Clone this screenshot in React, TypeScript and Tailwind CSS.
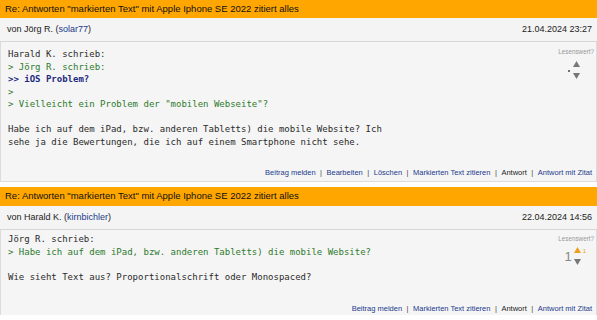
import React from "react";

const sans = "font-['Liberation_Sans',Arial,sans-serif]";
const mono = "font-['DejaVu_Sans_Mono',monospace]";

function Up({ color }: { color: string }) {
  return (
    <svg width="7" height="6" viewBox="0 0 7 6" className="block">
      <polygon points="3.5,0 7,6 0,6" fill={color} />
    </svg>
  );
}
function Down({ color }: { color: string }) {
  return (
    <svg width="7" height="6" viewBox="0 0 7 6" className="block">
      <polygon points="0,0 7,0 3.5,6" fill={color} />
    </svg>
  );
}

function Links({ items }: { items: string[] }) {
  return (
    <div className="flex justify-end items-center text-[7.5px] leading-[12px] pr-[4px]">
      {items.map((t, i) => (
        <React.Fragment key={t + i}>
          {i > 0 && <span className="text-[#444] px-[4.5px]">|</span>}
          <span className={t === "Antwort" ? "text-[#222]" : "text-[#1b3a8c]"}>{t}</span>
        </React.Fragment>
      ))}
    </div>
  );
}

function Header({ author, nick, date, h }: { author: string; nick: string; date: string; h: string }) {
  return (
    <>
      <div className={`${h} bg-[#ffa600] px-[5px] flex items-center text-[9.5px] text-[#111]`}>
        Re: Antworten "markierten Text" mit Apple Iphone SE 2022 zitiert alles
      </div>
      <div className="h-[24px] bg-[#f4f4f4] border-b border-[#d6d6d6] px-[7px] pt-[1px] pr-[5px] flex justify-between items-center text-[9px] text-[#222]">
        <span>
          von {author} (<span className="text-[#1b3a8c]">{nick}</span>)
        </span>
        <span>{date}</span>
      </div>
    </>
  );
}

export default function App() {
  return (
    <div className={`w-[597px] h-[320px] bg-white overflow-hidden ${sans}`}>
      {/* Post 1 */}
      <div>
        <Header author="Jörg R." nick="solar77" date="21.04.2024 23:27" h="h-[18px]" />
        <div className="relative bg-[#f5f5f5] border-x border-b border-[#dcdcdc] pt-[6px] pb-[2px]">
          <div className={`${mono} text-[9px] leading-[12.5px] text-[#2a2a2a] px-[7px] whitespace-pre`}>
            <div>Harald K. schrieb:</div>
            <div className="text-[#2d7a2d]">&gt; Jörg R. schrieb:</div>
            <div className="text-[#1c2a80] font-bold">&gt;&gt; iOS Problem?</div>
            <div className="text-[#2d7a2d]">&gt;</div>
            <div className="text-[#2d7a2d]">&gt; Vielleicht ein Problem der "mobilen Webseite"?</div>
            <div>&nbsp;</div>
            <div>Habe ich auf dem iPad, bzw. anderen Tabletts) die mobile Website? Ich</div>
            <div>sehe ja die Bewertungen, die ich auf einem Smartphone nicht sehe.</div>
          </div>
          <div className="mt-[19px]">
            <Links items={["Beitrag melden", "Bearbeiten", "Löschen", "Markierten Text zitieren", "Antwort", "Antwort mit Zitat"]} />
          </div>
          <div className="absolute top-[6px] right-[2px] flex flex-col items-end">
            <div className="text-[6.3px] leading-[8px] text-[#999]">Lesenswert?</div>
            <div className="flex items-end mr-[14px] mt-[5px] gap-[3px]">
              <div className="w-[2px] h-[2px] rounded-full bg-[#444] mb-[7px]" />
              <div className="flex flex-col gap-[6px]">
                <Up color="#777" />
                <Down color="#777" />
              </div>
            </div>
          </div>
        </div>
      </div>

      <div className="h-[5px]" />

      {/* Post 2 */}
      <div>
        <Header author="Harald K." nick="kirnbichler" date="22.04.2024 14:56" h="h-[19px]" />
        <div className="relative bg-[#f5f5f5] border-x border-[#dcdcdc] pt-[3px]">
          <div className={`${mono} text-[9px] leading-[12.5px] text-[#2a2a2a] px-[7px] whitespace-pre`}>
            <div>Jörg R. schrieb:</div>
            <div className="text-[#2d7a2d]">&gt; Habe ich auf dem iPad, bzw. anderen Tabletts) die mobile Website?</div>
            <div>&nbsp;</div>
            <div>Wie sieht Text aus? Proportionalschrift oder Monospaced?</div>
          </div>
          <div className="mt-[20px]">
            <Links items={["Beitrag melden", "Markierten Text zitieren", "Antwort", "Antwort mit Zitat"]} />
          </div>
          <div className="absolute top-[5px] right-[2px] flex flex-col items-end">
            <div className="text-[6.3px] leading-[8px] text-[#999]">Lesenswert?</div>
            <div className="flex items-start mr-[8px] mt-[4px]">
              <div className="text-[13px] leading-[13px] text-[#888] mt-[3px] mr-[2px]">1</div>
              <div className="flex flex-col gap-[6px]">
                <Up color="#f0a020" />
                <Down color="#777" />
              </div>
              <div className="text-[6px] leading-[6px] text-[#f0a020] ml-[2px] mt-[1px]">1</div>
            </div>
          </div>
        </div>
      </div>
    </div>
  );
}
